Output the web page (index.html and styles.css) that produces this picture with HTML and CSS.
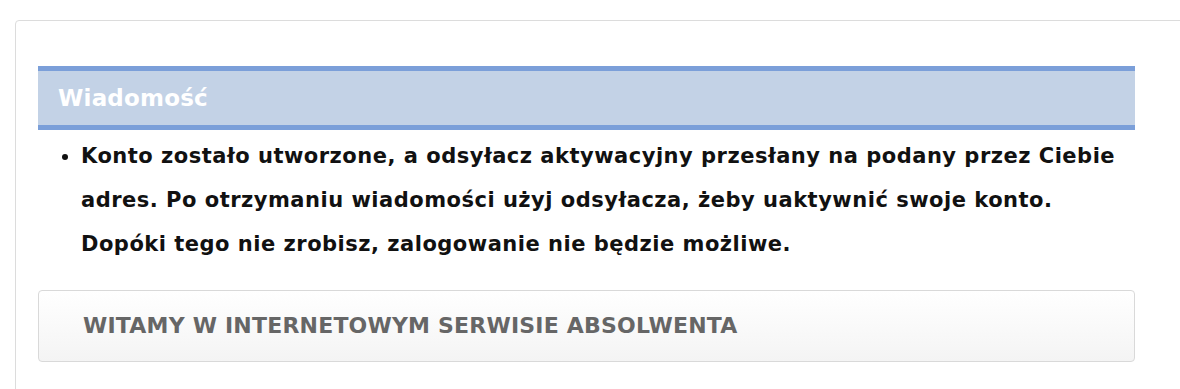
FILE: index.html
```html
<!DOCTYPE html>
<html lang="pl">
<head>
  <meta charset="UTF-8" />
  <title>Internetowy Serwis Absolwenta</title>
  <link rel="stylesheet" href="styles.css">
</head>
<body>

  <div class="panel">
    <div class="message">
      <div class="message-head">Wiadomość</div>
      <ul class="message-list">
        <li>Konto zostało utworzone, a odsyłacz aktywacyjny przesłany na podany przez Ciebie adres. Po otrzymaniu wiadomości użyj odsyłacza, żeby uaktywnić swoje konto. Dopóki tego nie zrobisz, zalogowanie nie będzie możliwe.</li>
      </ul>
    </div>

    <div class="welcome">WITAMY W INTERNETOWYM SERWISIE ABSOLWENTA</div>
  </div>

</body>
</html>
```

FILE: styles.css
```css
body {
  margin: 0;
  padding: 20px 0 0 15px;
  background: #fff;
  font-family: "DejaVu Sans", Verdana, sans-serif;
  overflow: hidden;
}

.panel {
  width: 1200px;
  height: 380px;
  border: 1px solid #dcdcdc;
  border-radius: 4px 0 0 0;
  padding: 45px 0 0 22px;
  box-sizing: border-box;
}

.message {
  width: 1097px;
}

.message-head {
  height: 54px;
  line-height: 54px;
  padding-left: 20px;
  background: #c3d2e6;
  border-top: 5px solid #7b9fd9;
  border-bottom: 5px solid #7b9fd9;
  color: #fff;
  font-weight: 700;
  font-size: 23px;
  letter-spacing: 0.2px;
}

.message-list {
  margin: 4px 0 0;
  padding: 0 12px 0 43px;
  color: #111;
  font-weight: 700;
  font-size: 21px;
  line-height: 44px;
  letter-spacing: 0.5px;
}

.welcome {
  width: 1097px;
  height: 72px;
  margin-top: 24px;
  box-sizing: border-box;
  padding-left: 44px;
  line-height: 70px;
  border: 1px solid #d9d9d9;
  border-radius: 4px;
  background: linear-gradient(#ffffff, #f4f4f4);
  color: #666;
  font-weight: 700;
  font-size: 22px;
  letter-spacing: 0.2px;
}
```
